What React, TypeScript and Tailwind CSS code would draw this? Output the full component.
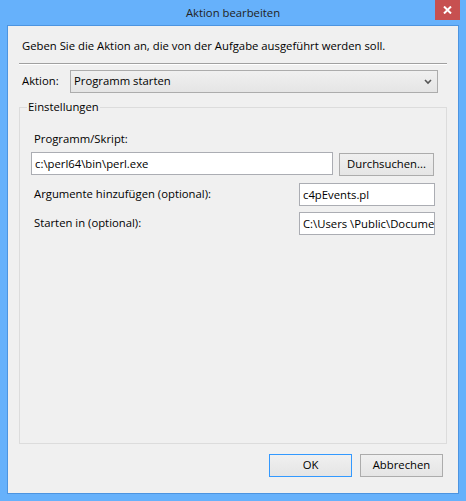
import React from "react";

const font = { fontFamily: '"Open Sans", "Noto Sans", sans-serif' };

function TextBox({ value, className }: { value: string; className: string }) {
  return (
    <div
      className={`h-[23px] border border-[#abadb3] bg-white pl-[3px] text-[11.3px] leading-[21px] text-black overflow-hidden whitespace-nowrap ${className}`}
    >
      {value}
    </div>
  );
}

function Button({ label, primary, className }: { label: string; primary?: boolean; className: string }) {
  return (
    <div
      className={`h-[23px] flex items-center justify-center border bg-gradient-to-b from-[#f0f0f0] to-[#e5e5e5] text-[11.3px] text-black ${
        primary ? "border-[#3399ff]" : "border-[#acacac]"
      } ${className}`}
    >
      {label}
    </div>
  );
}

export default function App() {
  return (
    <div className="w-[466px] h-[501px] bg-[#66b1fb] flex flex-col px-[7px] pb-[7px] text-[11.3px]" style={font}>
      <div className="relative h-[25px] shrink-0">
        <div className="text-center text-[11.3px] leading-[26px] text-[#222]">Aktion bearbeiten</div>
        <div className="absolute top-0 right-[-1px] w-[25px] h-[20px] bg-[#c75050] flex items-center justify-center">
          <svg width="9" height="8" viewBox="0 0 9 8">
            <path d="M1 0.5 L8 7.5 M8 0.5 L1 7.5" stroke="#fff" strokeWidth="2" />
          </svg>
        </div>
      </div>

      <div className="flex-1 border border-[#4c94e0] bg-[#f0f0f0] flex flex-col text-black">
        <div className="pl-[14px] pt-[12px] leading-[16px]">
          Geben Sie die Aktion an, die von der Aufgabe ausgeführt werden soll.
        </div>
        <div className="mt-[9px] mx-[11px] h-[2px] border-t border-[#a0a0a0] border-b border-b-white" />

        <div className="mt-[5px] flex items-center pl-[14px] pr-[20px]">
          <div className="w-[48px]">Aktion:</div>
          <div className="flex-1 h-[23px] border border-[#acacac] bg-gradient-to-b from-[#f0f0f0] to-[#e5e5e5] flex items-center justify-between pl-[3px] pr-[5px]">
            <span>Programm starten</span>
            <svg width="8" height="6" viewBox="0 0 8 6">
              <path d="M1 1 L4 4 L7 1" stroke="#555" strokeWidth="1.6" fill="none" />
            </svg>
          </div>
        </div>

        <div className="relative mt-[14px] mx-[11px] h-[337px] border border-[#dcdcdc]">
          <div className="absolute -top-[9px] left-[7px] px-[1px] bg-[#f0f0f0] leading-[16px]">
            Einstellungen
          </div>
          <div className="pl-[14px] pt-[23px] leading-[16px]">Programm/Skript:</div>
          <div className="flex mt-[5px] pl-[11px]">
            <TextBox value="c:\perl64\bin\perl.exe" className="w-[302px]" />
            <Button label="Durchsuchen..." className="ml-[6px] w-[95px] h-[22px] mt-[1px]" />
          </div>
          <div className="flex items-center mt-[7px] pl-[14px]">
            <div className="w-[265px]">Argumente hinzufügen (optional):</div>
            <TextBox value="c4pEvents.pl" className="w-[136px]" />
          </div>
          <div className="flex items-center mt-[6px] pl-[14px]">
            <div className="w-[265px]">Starten in (optional):</div>
            <TextBox value="C:\Users \Public\Documents" className="w-[136px]" />
          </div>
        </div>

        <div className="flex justify-end mt-[10px] pr-[15px] gap-[8px]">
          <Button label="OK" primary className="w-[83px]" />
          <Button label="Abbrechen" className="w-[83px]" />
        </div>
      </div>
    </div>
  );
}
